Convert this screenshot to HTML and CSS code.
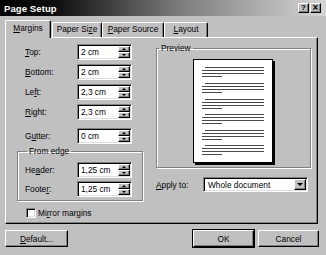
FILE: index.html
```html
<!DOCTYPE html>
<html lang="en">
<head>
	<meta charset="UTF-8">
	<title>Page Setup</title>
	<link rel="stylesheet" href="styles.css">
</head>
<body>
	<div class="dialog">
		<div class="titlebar">
			<span class="title">Page Setup</span>
			<span class="tbtn">?</span>
			<span class="tbtn close">&#215;</span>
		</div>

		<div class="tabs">
			<span class="tab active w-margins"><u>M</u>argins</span>
			<span class="tab w-size">Paper Si<u>z</u>e</span>
			<span class="tab w-source"><u>P</u>aper Source</span>
			<span class="tab w-layout"><u>L</u>ayout</span>
		</div>

		<div class="panel">
			<div class="col-left">
				<div class="fields">
					<label><u>T</u>op:</label>
					<div class="input"><span class="val">2 cm</span><span class="spin"><i class="up"></i><i class="down"></i></span></div>
					<label><u>B</u>ottom:</label>
					<div class="input"><span class="val">2 cm</span><span class="spin"><i class="up"></i><i class="down"></i></span></div>
					<label>Le<u>f</u>t:</label>
					<div class="input"><span class="val">2,3 cm</span><span class="spin"><i class="up"></i><i class="down"></i></span></div>
					<label><u>R</u>ight:</label>
					<div class="input"><span class="val">2,3 cm</span><span class="spin"><i class="up"></i><i class="down"></i></span></div>
				</div>
				<div class="fields gutter">
					<label>G<u>u</u>tter:</label>
					<div class="input"><span class="val">0 cm</span><span class="spin"><i class="up"></i><i class="down"></i></span></div>
				</div>

				<fieldset class="group edge">
					<legend>From edge</legend>
					<div class="fields inner">
						<label>He<u>a</u>der:</label>
						<div class="input"><span class="val">1,25 cm</span><span class="spin"><i class="up"></i><i class="down"></i></span></div>
						<label>Foote<u>r</u>:</label>
						<div class="input"><span class="val">1,25 cm</span><span class="spin"><i class="up"></i><i class="down"></i></span></div>
					</div>
				</fieldset>

				<div class="check-row">
					<span class="checkbox"></span>
					<span>Mi<u>r</u>ror margins</span>
				</div>
			</div>

			<div class="col-right">
				<fieldset class="group preview">
					<legend>Preview</legend>
					<svg class="page" width="82" height="106" viewBox="0 0 82 106">
						<rect x="2" y="2" width="80" height="104" fill="#000"/>
						<rect x="0.5" y="0.5" width="79" height="103" fill="#fff" stroke="#000"/>
						<g stroke="#4a4a4a" stroke-width="1">
							<path d="M12 8.5H71M9 11.5H71M9 14.5H71M9 17.5H29"/>
							<path d="M12 24.5H71M9 27.5H71M9 30.5H71M9 33.5H29"/>
							<path d="M12 40.5H71M9 43.5H71M9 46.5H71M9 49.5H29"/>
							<path d="M12 55.5H71M9 58.5H71M9 61.5H71M9 64.5H29"/>
							<path d="M12 71.5H71M9 74.5H71M9 77.5H71M9 80.5H29"/>
							<path d="M12 86.5H71M9 89.5H71M9 92.5H71M9 95.5H29"/>
						</g>
					</svg>
				</fieldset>

				<div class="apply-row">
					<label><u>A</u>pply to:</label>
					<div class="select">
						<span class="val">Whole document</span>
						<span class="drop"><i class="down"></i></span>
					</div>
				</div>
			</div>
		</div>

		<div class="buttons">
			<span class="btn w-default"><u>D</u>efault...</span>
			<span class="btn default-btn w-ok">OK</span>
			<span class="btn w-cancel">Cancel</span>
		</div>
	</div>
</body>
</html>
```

FILE: styles.css
```css
* {
	box-sizing: border-box;
}

body {
	margin: 0;
	background-color: #c0c0c0;
	font-family: "Liberation Sans", Arial, sans-serif;
	font-size: 8.3px;
	color: #000;
	overflow: hidden;
}

u {
	text-decoration: underline;
	text-underline-offset: 1px;
}

.dialog {
	width: 326px;
	height: 255px;
	display: flex;
	flex-direction: column;
}

/* title bar */
.titlebar {
	height: 16px;
	display: flex;
	align-items: center;
	padding: 0 5px 0 4px;
	background: linear-gradient(to right, #000 0%, #111 18%, #7c7c7c 55%, #d6d6d6 100%);
}

.title {
	flex: 1;
	color: #fff;
	font-weight: bold;
	font-size: 9.5px;
	letter-spacing: 0.1px;
}

.tbtn {
	width: 11px;
	height: 10px;
	display: flex;
	align-items: center;
	justify-content: center;
	background-color: #c0c0c0;
	border: 1px solid;
	border-color: #fff #000 #000 #fff;
	box-shadow: inset -1px -1px #808080;
	font-size: 8px;
	font-weight: bold;
	line-height: 1;
}

.tbtn.close {
	margin-left: 1px;
	font-size: 10px;
}

/* tabs */
.tabs {
	display: flex;
	align-items: flex-end;
	height: 17px;
	margin-top: 4px;
	padding-left: 5px;
	z-index: 1;
}

.tab {
	height: 15px;
	text-align: center;
	line-height: 13px;
	border: 1px solid;
	border-color: #fff #000 transparent #fff;
	border-bottom: none;
	border-radius: 2px 2px 0 0;
	box-shadow: inset -1px 0 #808080;
	background-color: #c0c0c0;
}

.tab.active {
	height: 18px;
	line-height: 14px;
	margin-bottom: -1px;
	z-index: 2;
}

.w-margins { width: 46px; }
.w-size { width: 50px; margin-left: 1px; }
.w-source { width: 62px; }
.w-layout { width: 44px; }

/* panel */
.panel {
	margin-left: 5px;
	width: 313px;
	height: 187px;
	display: flex;
	gap: 13px;
	padding: 6px 0 0 11px;
	border: 1px solid;
	border-color: #fff #000 #000 #fff;
	box-shadow: inset -1px -1px #808080;
}

.col-left {
	width: 126px;
}

.col-right {
	width: 155px;
}

.fields {
	display: grid;
	grid-template-columns: 52px 55px;
	row-gap: 4px;
	align-items: center;
	margin-left: 8px;
}

.fields.gutter {
	margin-top: 8px;
}

.fields.inner {
	margin-left: 0;
	row-gap: 3px;
}

.input {
	height: 16px;
	display: flex;
	align-items: center;
	background-color: #fff;
	border: 1px solid;
	border-color: #808080 #fff #fff #808080;
	box-shadow: inset 1px 1px #000, inset -1px -1px #dfdfdf;
	padding: 0 1px 0 3px;
}

.input .val,
.select .val {
	flex: 1;
	white-space: nowrap;
}

.spin {
	width: 12px;
	height: 12px;
	display: flex;
	flex-direction: column;
}

.spin i,
.drop {
	flex: 1;
	display: flex;
	align-items: center;
	justify-content: center;
	background-color: #c0c0c0;
	border: 1px solid;
	border-color: #fff #000 #000 #fff;
	box-shadow: inset -1px -1px #808080;
}

.up::before,
.down::before {
	content: "";
	border-left: 2px solid transparent;
	border-right: 2px solid transparent;
}

.up::before {
	border-bottom: 2px solid #000;
}

.down::before {
	border-top: 2px solid #000;
}

.drop i {
	display: block;
	width: 6px;
	height: 3px;
}

.drop .down::before {
	display: block;
	width: 0;
	height: 0;
	border-left-width: 3px;
	border-right-width: 3px;
	border-top-width: 3px;
}

/* group boxes */
.group {
	margin: 0;
	padding: 0;
	border: 1px solid #808080;
	box-shadow: inset 1px 1px #fff, 1px 1px #fff;
}

.group legend {
	padding: 0 2px;
	margin-left: 2px;
	line-height: 10px;
}

.edge {
	margin-top: 2px;
	padding: 6px 0 3px 7px;
}

.check-row {
	display: flex;
	align-items: center;
	margin-top: 7px;
	padding-left: 9px;
	gap: 2px;
}

.checkbox {
	width: 10px;
	height: 10px;
	background-color: #fff;
	border: 1px solid;
	border-color: #808080 #fff #fff #808080;
	box-shadow: inset 1px 1px #000, inset -1px -1px #dfdfdf;
}

.preview {
	margin-top: -1px;
	height: 125px;
	display: flex;
	justify-content: center;
	padding-top: 6px;
}

.page {
	display: block;
}

.apply-row {
	display: flex;
	align-items: center;
	margin-top: 9px;
}

.apply-row label {
	width: 47px;
}

.select {
	width: 105px;
	height: 15px;
	display: flex;
	align-items: center;
	background-color: #fff;
	border: 1px solid;
	border-color: #808080 #fff #fff #808080;
	box-shadow: inset 1px 1px #000, inset -1px -1px #dfdfdf;
	padding: 0 1px 0 4px;
}

.drop {
	flex: none;
	width: 12px;
	height: 11px;
}

/* bottom buttons */
.buttons {
	display: flex;
	margin-top: 6px;
	padding: 0 7px 0 5px;
	gap: 4px;
}

.btn {
	height: 17px;
	display: flex;
	align-items: center;
	justify-content: center;
	background-color: #c0c0c0;
	border: 1px solid;
	border-color: #fff #000 #000 #fff;
	box-shadow: inset -1px -1px #808080;
}

.default-btn {
	margin-left: auto;
	outline: 1px solid #000;
}

.w-default { width: 63px; }
.w-ok { width: 61px; }
.w-cancel { width: 61px; }
```
